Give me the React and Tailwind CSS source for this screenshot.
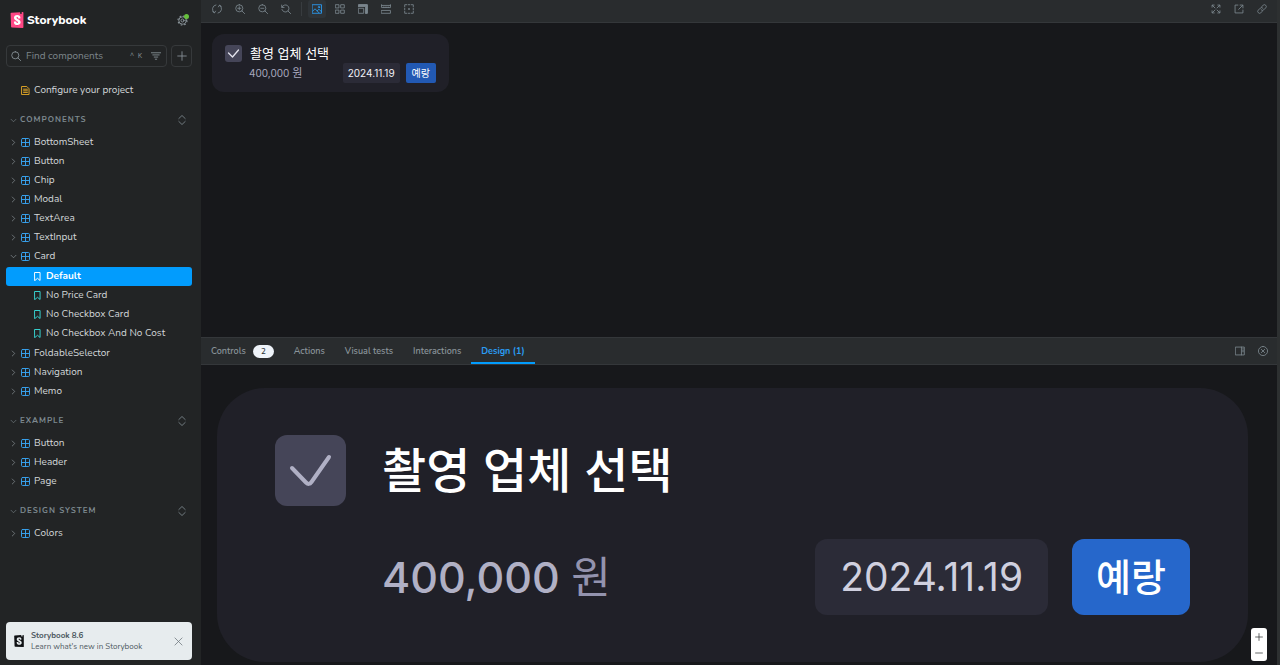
import React, { useState } from 'react';
import { SiStorybook } from 'react-icons/si';

const components = [
    { name: 'BottomSheet' },
    { name: 'Button' },
    { name: 'Chip' },
    { name: 'Modal' },
    { name: 'TextArea' },
    { name: 'TextInput' },
    { name: 'Card', stories: ['Default', 'No Price Card', 'No Checkbox Card', 'No Checkbox And No Cost'] },
    { name: 'FoldableSelector' },
    { name: 'Navigation' },
    { name: 'Memo' },
];

const sections = [
    { title: 'Components', items: components },
    { title: 'Example', items: [{ name: 'Button' }, { name: 'Header' }, { name: 'Page' }] },
    { title: 'Design System', items: [{ name: 'Colors' }] },
];

const tabs = [
    { name: 'Controls', count: 2 },
    { name: 'Actions' },
    { name: 'Visual tests' },
    { name: 'Interactions' },
    { name: 'Design (1)' },
];

// All icons share a 14 unit grid
const icons = {
    sync: <path d="M1 10.800l2.400 1.700L5 10M3.400 12.200A6 6 0 0 1 5.500 1.300M13 3.200l-2.400-1.700L9 4M10.600 1.800A6 6 0 0 1 8.500 12.700" />,
    zoomIn: <path d="M6 1a5 5 0 1 0 0 10A5 5 0 0 0 6 1ZM9.6 9.6l3.9 3.9M6 3.8v4.4M3.8 6h4.4" />,
    zoomOut: <path d="M6 1a5 5 0 1 0 0 10A5 5 0 0 0 6 1ZM9.6 9.6l3.9 3.9M3.8 6h4.4" />,
    zoomReset: <path d="M1 1.5v3.3h3.3M1.4 4.5a5 5 0 1 1-.1 3.2M9.6 9.6l3.9 3.9" />,
    photo: (
        <>
            <path d="M.7 1h12.600v12H.7zM.8 10.2l3.4-3.5 5.6 5.6M7.4 9.6l2.3-2.4 3.6 3.7" />
            <circle cx="9.7" cy="4.4" r="1" />
        </>
    ),
    grid: <path d="M1 1h4.500v4.500H1zM8.500 1H13v4.500H8.500zM1 8.500h4.500V13H1zM8.500 8.500H13V13H8.500z" />,
    grow: (
        <>
            <path d="M1 6h7v7H1zM1 4V1h12v12h-2.500" />
            <path d="M1 1h12v12h-2.500V3.500H1z" fill="currentColor" />
        </>
    ),
    ruler: <path d="M.8 1v4h12.400V1M.8 2h12.400M.8 9h12.400v4H.8zM4 5V4M7 5V4M10 5V4" />,
    outline: (
        <>
            <path d="M1 4V1h3M10 1h3v3M13 10v3h-3M4 13H1v-3M6 1h2M6 13h2M1 6v2M13 6v2" />
            <path d="M7 6.200v1.600M6.200 7h1.600" />
        </>
    ),
    expand: <path d="M1.5 4.5v-3h3M9.5 1.5h3v3M12.5 9.5v3h-3M4.5 12.5h-3v-3M1.8 1.8l3.7 3.7M12.2 1.8 8.5 5.5M12.2 12.2 8.5 8.5M1.8 12.2l3.7-3.7" />,
    share: <path d="M5.5 1.5h-4v11h11v-4M8.5 1.5h4v4M12.3 1.7 6.5 7.5" />,
    link: <path d="M6.2 4.2 8.6 1.8a2.5 2.5 0 0 1 3.6 3.6L9.4 8.2a2.5 2.5 0 0 1-3.6 0M7.8 9.8l-2.4 2.4a2.5 2.5 0 0 1-3.6-3.6l2.8-2.8a2.5 2.5 0 0 1 3.6 0" />,
    sidebar: <path d="M1 1.5h12v11H1zM9 1.5v11M10.7 4h1M10.7 6h1M10.7 8h1" />,
    closeRound: <path d="M7 .6a6.4 6.4 0 1 0 0 12.8A6.4 6.4 0 0 0 7 .6ZM4.7 4.7l4.6 4.6M9.3 4.7 4.7 9.3" />,
    close: <path d="m1.5 1.5 11 11M12.5 1.5l-11 11" />,
    plus: <path d="M7 1v12M1 7h12" />,
    minus: <path d="M1 7h12" />,
    search: <path d="M6 1a5 5 0 1 0 0 10A5 5 0 0 0 6 1ZM9.6 9.6l3.9 3.9" />,
    filter: <path d="M.5 2.5h13M2.5 5.5h9M4.5 8.5h5M6 11.5h2" />,
    chevronRight: <path d="m4.5 2 5 5-5 5" />,
    chevronDown: <path d="m2 4.5 5 5 5-5" />,
    expandAll: <path d="m2.5 5 4.5-4.3L11.5 5M2.5 9 7 13.3 11.5 9" />,
    component: <path strokeWidth="1.500" d="M2.500 .8h9a1.700 1.700 0 0 1 1.700 1.700v9a1.700 1.700 0 0 1-1.700 1.700h-9A1.700 1.700 0 0 1 .8 11.500v-9A1.700 1.700 0 0 1 2.500 .8ZM7 1v12M1 7h12" />,
    bookmark: <path strokeWidth="1.500" d="M3 .8h8v12.400L7 9.800l-4 3.400z" />,
    document: <path strokeWidth="1.500" d="M1.500 .8h7.500l3.500 3.500v9h-11zM4 5h6M4 7.500h6M4 10h6" />,
    gear: (
        <>
            <circle cx="7" cy="7" r="5.800" strokeWidth="1.400" strokeDasharray="2.200 2.355" strokeLinecap="butt" />
            <circle cx="7" cy="7" r="4.700" />
            <circle cx="7" cy="7" r="1.900" />
        </>
    ),
};

const Icon = ({ name, className = 'size-[10px]' }) => (
    <svg
        viewBox="0 0 14 14"
        fill="none"
        stroke="currentColor"
        strokeWidth="1.2"
        strokeLinecap="round"
        strokeLinejoin="round"
        aria-hidden="true"
        className={`shrink-0 ${className}`}
    >
        {icons[name]}
    </svg>
);

const ToolButton = ({ icon, label, active }) => (
    <button
        aria-label={label}
        className={`flex w-[18px] h-[18px] items-center justify-center rounded-[3px] ${active ? 'bg-[#2f3438] text-[#2a9df4]' : 'text-[#7b868d]'}`}
    >
        <Icon name={icon} />
    </button>
);

const TreeItem = ({ item, selected, onSelect }) => (
    <li>
        <button className="flex w-full h-[19px] items-center pl-[4px] text-[#d3d7d9]">
            <Icon name={item.stories ? 'chevronDown' : 'chevronRight'} className="size-[7px] mr-[4px] text-[#9aa4aa]" />
            <Icon name="component" className="size-[9px] mr-[4px] text-[#38a3f0]" />
            {item.name}
        </button>
        {item.stories && (
            <ul className="py-px">
                {item.stories.map((story) => (
                    <li key={story}>
                        <button
                            className={`flex w-full h-[19px] items-center pl-[27px] rounded-[3px] ${story === selected ? 'bg-[#029cfd] text-white font-bold' : 'text-[#d3d7d9]'}`}
                            onClick={() => onSelect(story)}
                        >
                            <Icon name="bookmark" className={`size-[9px] mr-[4px] ${story === selected ? 'text-white' : 'text-[#37d5d3]'}`} />
                            {story}
                        </button>
                    </li>
                ))}
            </ul>
        )}
    </li>
);

const Sidebar = () => {
    const [selected, setSelected] = useState('Default');

    return (
        <aside className="flex flex-col w-[201px] shrink-0 bg-[#222425] pl-[6px] pr-[9px] text-[10px]">
            <header className="flex h-[20px] mt-[10px] items-center pl-[3px] pr-[4px]">
                <span className="mr-[2px] bg-[linear-gradient(white,white)] bg-[length:8px_10px] bg-center bg-no-repeat">
                    <SiStorybook className="size-[16px] text-[#ff4785]" />
                </span>
                <a href="#home" className="text-[12px] font-extrabold text-white">Storybook</a>
                <button aria-label="Settings" className="relative ml-auto text-[#8a949a]">
                    <Icon name="gear" className="size-[11px]" />
                    <span className="absolute -top-px -right-px size-[5px] rounded-full bg-[#66bf3c]" />
                </button>
            </header>

            <div className="flex mt-[15px] gap-[4px]">
                <label className="flex flex-1 min-w-0 h-[22px] items-center rounded-[4px] border border-[#36393b] px-[4px] text-[#8a949a]">
                    <Icon name="search" />
                    <input
                        type="text"
                        aria-label="Find components"
                        placeholder="Find components"
                        className="flex-1 min-w-0 ml-[5px] bg-transparent outline-none placeholder:text-[#7d868b]"
                    />
                    <kbd className="mr-[9px] font-[Open_Sans,sans-serif] text-[7px]">^ &nbsp;K</kbd>
                    <Icon name="filter" className="size-[10px] mr-px" />
                </label>
                <button aria-label="Create a new story" className="flex w-[21px] h-[22px] items-center justify-center rounded-[4px] border border-[#36393b] text-[#8a949a]">
                    <Icon name="plus" />
                </button>
            </div>

            <a href="#configure" className="flex h-[19px] mt-[14px] items-center pl-[15px] text-[#d3d7d9]">
                <Icon name="document" className="size-[9px] mr-[4px] text-[#e0a526]" />
                Configure your project
            </a>

            <nav>
                {sections.map((section) => (
                    <section key={section.title} className="mt-[10px]">
                        <div className="flex h-[20px] items-center pl-[4px] pr-[5px] text-[#7d898f]">
                            <button className="flex items-center text-[8px] font-bold uppercase tracking-[1px]">
                                <Icon name="chevronDown" className="size-[7px] mr-[3px]" />
                                {section.title}
                            </button>
                            <button aria-label={`Expand ${section.title}`} className="ml-auto">
                                <Icon name="expandAll" />
                            </button>
                        </div>
                        <ul className="mt-[3px]">
                            {section.items.map((item) => (
                                <TreeItem key={item.name} item={item} selected={selected} onSelect={setSelected} />
                            ))}
                        </ul>
                    </section>
                ))}
            </nav>

            <div className="flex h-[38px] mt-auto mb-[5px] items-center rounded-[4px] bg-[#e7ecee] pl-[7px] pr-[9px]">
                <SiStorybook className="size-[12px] mr-[6px] text-[#101214]" />
                <div className="text-[8px] leading-[11px] text-[#4d5860]">
                    <p className="font-bold">Storybook 8.6</p>
                    <p>Learn what's new in Storybook</p>
                </div>
                <button aria-label="Dismiss" className="ml-auto text-[#6d777d]">
                    <Icon name="close" className="size-[9px]" />
                </button>
            </div>
        </aside>
    );
};

const Preview = () => (
    <div className="flex-1 min-h-0 p-[11px]">
        <article className="w-[237px] rounded-[12px] bg-[#202028] px-[13px] pt-[10px] pb-[9px]">
            <div className="flex items-center">
                <label className="grid size-[17px] mr-[8px] place-items-center">
                    <input type="checkbox" defaultChecked aria-label="촬영 업체 선택" className="appearance-none col-start-1 row-start-1 size-[17px] rounded-[3px] bg-[#454558]" />
                    <svg viewBox="0 0 17 17" fill="none" stroke="#e4e4ee" strokeWidth="1.3" strokeLinecap="round" strokeLinejoin="round" className="col-start-1 row-start-1 size-[17px] pointer-events-none">
                        <path d="m3.500 8 4 4 6-7" />
                    </svg>
                </label>
                <h2 className="text-[13px] leading-[19px] text-white">촬영 업체 선택</h2>
            </div>
            <div className="flex h-[20px] items-center pl-[24px]">
                <p className="text-[10px] text-[#a9a9bf]">
                    400,000 <span className="text-[11px]">원</span>
                </p>
                <time className="ml-auto rounded-[2px] bg-[#2b2b37] px-[5px] text-[10px] leading-[20px] text-[#f2f2f7]">2024.11.19</time>
                <span className="ml-[6px] rounded-[2px] bg-[#2259b3] px-[6px] text-[10px] leading-[20px] text-white">예랑</span>
            </div>
        </article>
    </div>
);

const DesignPanel = () => (
    <div className="relative pt-[23px] pb-[3px] pl-[16px] pr-[29px]">
        <article className="rounded-[48px] bg-[#202028] px-[58px] py-[47px]">
            <div className="flex items-center">
                <label className="grid size-[71px] mr-[36px] place-items-center">
                    <input type="checkbox" defaultChecked aria-label="촬영 업체 선택" className="appearance-none col-start-1 row-start-1 size-[71px] rounded-[12px] bg-[#454558]" />
                    <svg viewBox="0 0 71 71" fill="none" stroke="#b0b0c5" strokeWidth="4" strokeLinecap="round" strokeLinejoin="round" className="col-start-1 row-start-1 size-[71px] pointer-events-none">
                        <path d="M17 33 31 47.500Q34 50.500 36.500 47L54 22" />
                    </svg>
                </label>
                <h2 className="text-[48px] leading-[71px] font-medium text-white">촬영 업체 선택</h2>
            </div>
            <div className="flex h-[76px] mt-[33px] items-center pl-[107px]">
                <p className="text-[43px] leading-[76px] font-medium text-[#b0b0c5]">
                    400,000 <span className="font-normal text-[#9393ae]">원</span>
                </p>
                <time className="ml-auto rounded-[12px] bg-[#2b2b37] px-[25px] text-[39px] leading-[76px] text-[#d0d0df]">2024.11.19</time>
                <span className="ml-[24px] rounded-[12px] bg-[#2667cb] px-[24px] text-[38px] leading-[76px] font-medium text-white">예랑</span>
            </div>
        </article>
        <div className="absolute right-[10px] bottom-[4px] flex flex-col rounded-[3px] bg-white text-[#222425]">
            <button aria-label="Zoom in" className="flex w-[16px] h-[17px] items-center justify-center"><Icon name="plus" className="size-[8px]" /></button>
            <button aria-label="Zoom out" className="flex w-[16px] h-[16px] items-center justify-center"><Icon name="minus" className="size-[8px]" /></button>
        </div>
    </div>
);

const App = () => {
    const [activeTab, setActiveTab] = useState('Design (1)');

    return (
        <div className="flex min-h-screen bg-[#17181b] font-['Nunito','Nunito_Sans','Open_Sans',sans-serif]">
            <Sidebar />
            <main className="flex flex-1 flex-col min-w-0 border-r-3 border-[#2d3031]">
                <div className="flex h-[23px] items-start gap-[5px] border-b border-[#34373a] bg-[#292c2e] pl-[7px] pr-[6px]">
                    <ToolButton icon="sync" label="Remount component" />
                    <ToolButton icon="zoomIn" label="Zoom in" />
                    <ToolButton icon="zoomOut" label="Zoom out" />
                    <ToolButton icon="zoomReset" label="Reset zoom" />
                    <span className="w-px h-[14px] mx-px mt-[2px] bg-[#383c3f]" />
                    <ToolButton icon="photo" label="Change background" active />
                    <ToolButton icon="grid" label="Apply a grid" />
                    <ToolButton icon="grow" label="Change viewport" />
                    <ToolButton icon="ruler" label="Enable measure" />
                    <ToolButton icon="outline" label="Apply outlines" />
                    <div className="flex ml-auto gap-[5px]">
                        <ToolButton icon="expand" label="Go full screen" />
                        <ToolButton icon="share" label="Open in new tab" />
                        <ToolButton icon="link" label="Copy link" />
                    </div>
                </div>

                <div className="flex flex-1 flex-col font-['Inter','Noto_Sans_CJK_KR',sans-serif]">
                    <Preview />
                </div>

                <div className="flex h-[28px] items-center border-y border-[#34373a] bg-[#292c2e] pr-[5px] text-[9px] font-semibold text-[#8a949a]">
                    <div role="tablist" className="flex h-full">
                        {tabs.map((tab) => (
                            <button
                                key={tab.name}
                                role="tab"
                                aria-selected={tab.name === activeTab}
                                onClick={() => setActiveTab(tab.name)}
                                className={`flex items-center px-[10px] pt-[3px] border-b-2 ${tab.name === activeTab ? 'border-b-[#029cfd] text-[#2a9df4] font-bold' : 'border-b-transparent'}`}
                            >
                                {tab.name}
                                {tab.count && (
                                    <span className="w-[21px] ml-[7px] rounded-full bg-[#eef3f9] text-[8px] leading-[13px] text-center text-[#2e3438]">{tab.count}</span>
                                )}
                            </button>
                        ))}
                    </div>
                    <div className="flex ml-auto gap-[5px]">
                        <ToolButton icon="sidebar" label="Change addon orientation" />
                        <ToolButton icon="closeRound" label="Hide addons" />
                    </div>
                </div>

                <div className="font-['Inter','Noto_Sans_CJK_KR',sans-serif]">
                    <DesignPanel />
                </div>
            </main>
        </div>
    );
};

export default App;
